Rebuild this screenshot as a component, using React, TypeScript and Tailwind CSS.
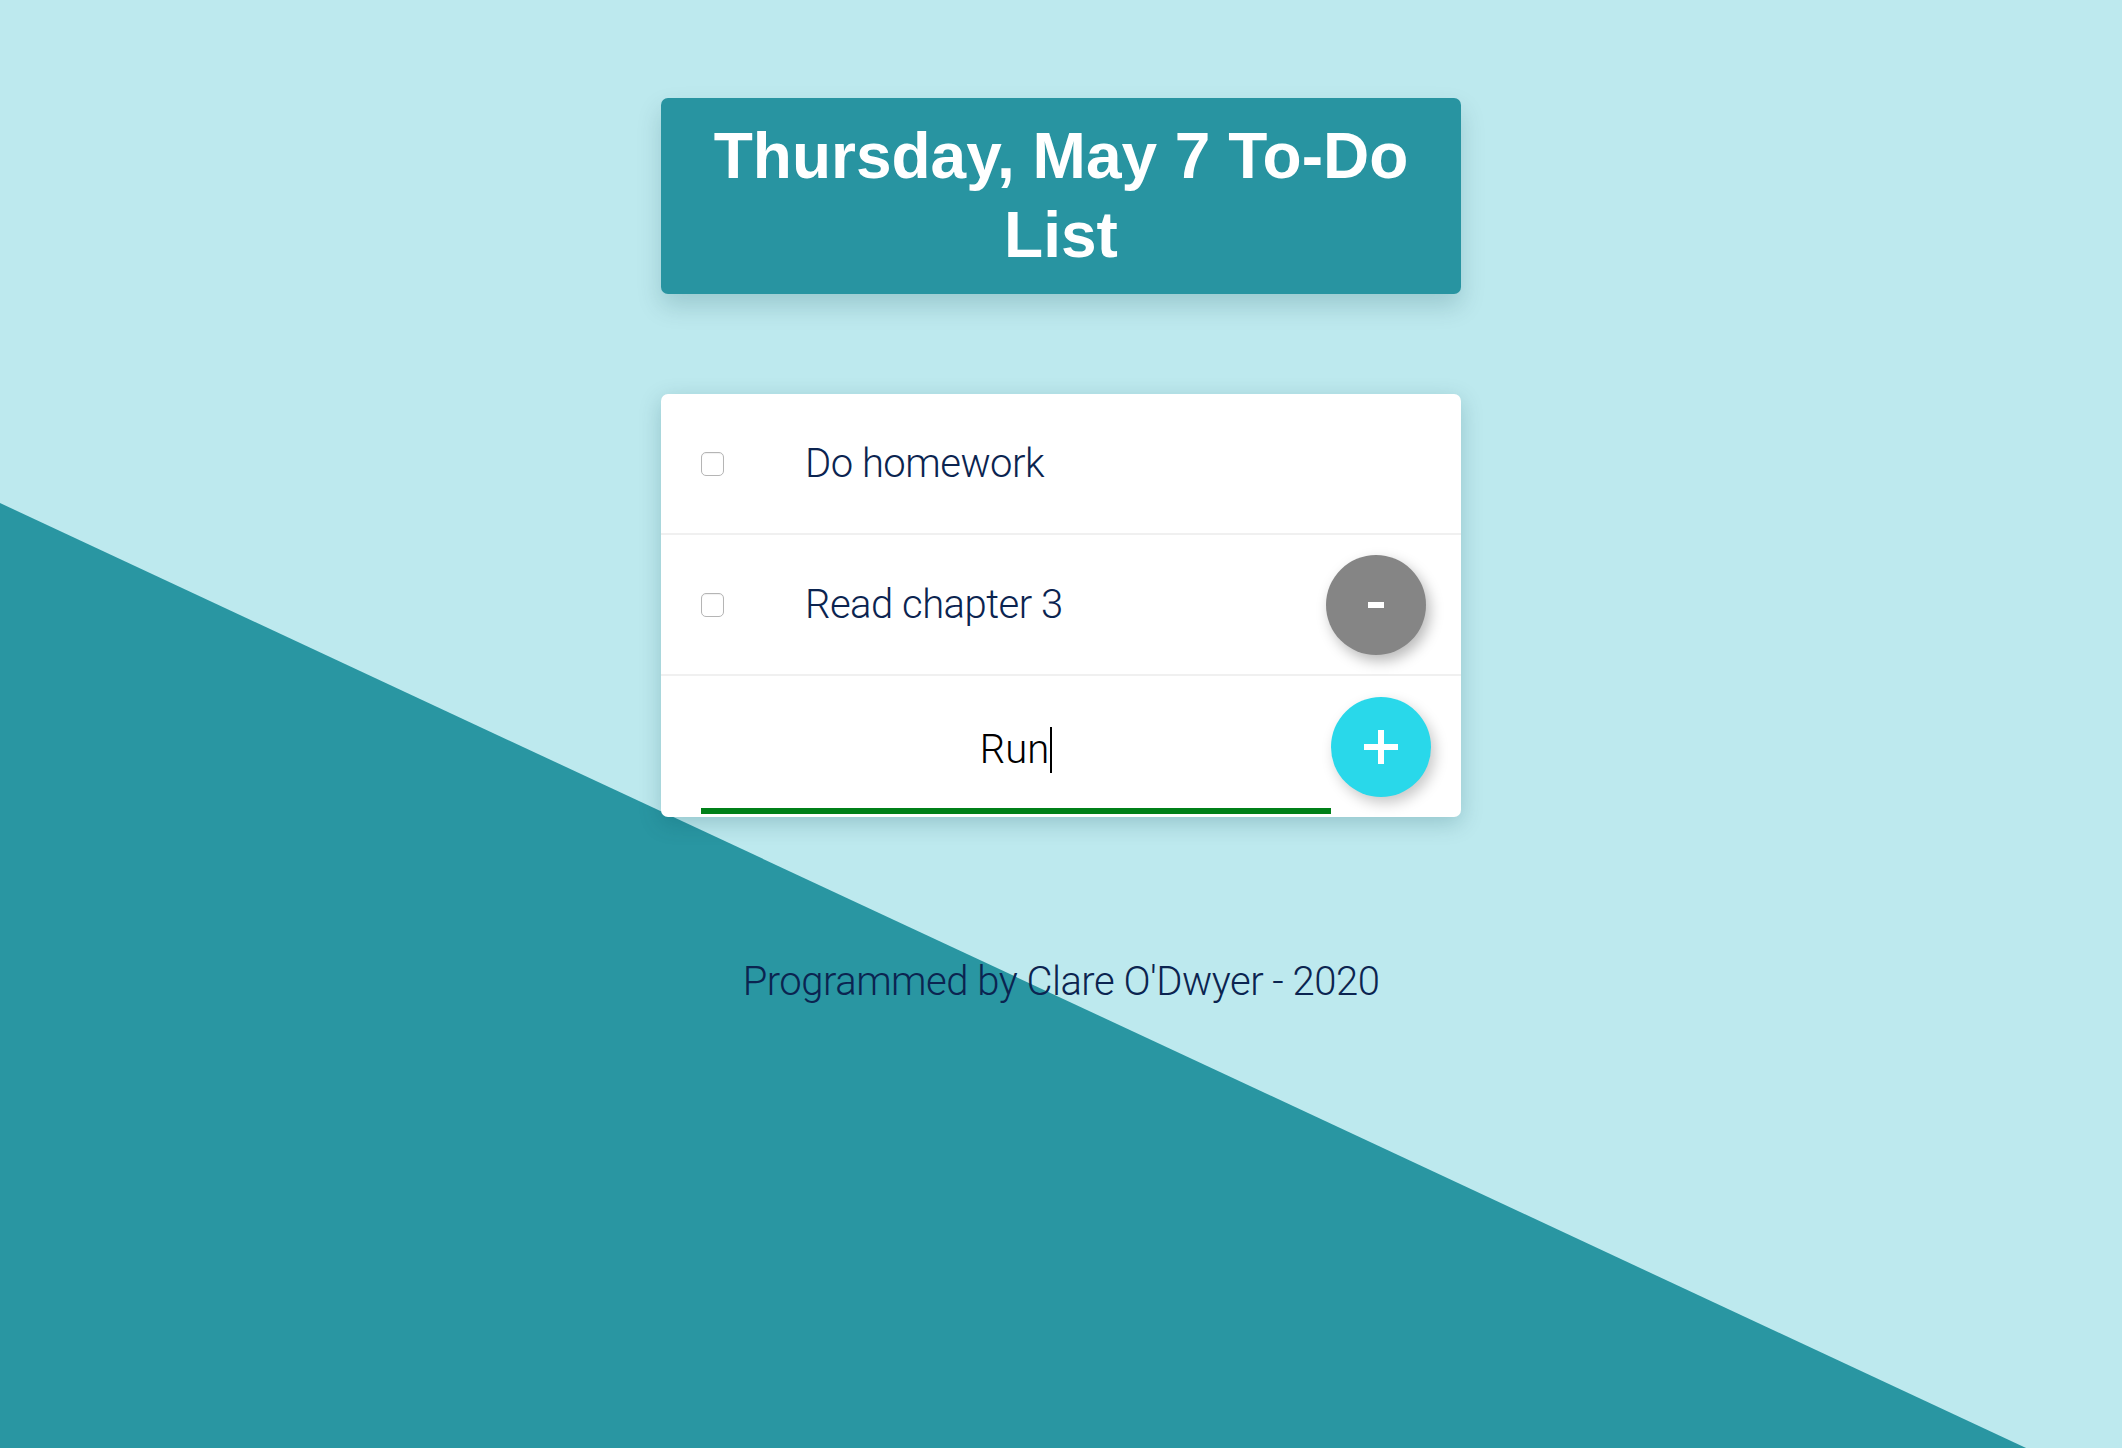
import React from 'react';

const todos = [
  { id: 1, text: 'Do homework', removable: false },
  { id: 2, text: 'Read chapter 3', removable: true },
];

const CheckBox = () => (
  <span className="block w-[23px] h-[24px] rounded-[5px] border border-[#b5b5b5] bg-white shadow-[inset_0_1px_1px_rgba(0,0,0,0.06)]" />
);

export default function App() {
  return (
    <div className="relative min-h-[1448px] w-full overflow-hidden bg-[#bde9ee]">
      {/* diagonal background band */}
      <div className="absolute inset-0 bg-[#2996a2] [clip-path:polygon(0_34.74%,95.48%_100%,0_100%)]" />

      <div className="relative flex flex-col items-center pt-[98px]">
        {/* Title */}
        <div className="w-[800px] rounded-[7px] bg-[#2894a1] py-[19px] px-6 text-center shadow-[0_12px_24px_rgba(0,60,70,0.18)]">
          <h1
            className="text-[64px] leading-[79px] font-bold text-white"
            style={{ fontFamily: '"Liberation Sans", Arial, sans-serif' }}
          >
            Thursday, May 7 To-Do List
          </h1>
        </div>

        {/* List card */}
        <div className="mt-[100px] w-[800px] rounded-[7px] bg-white shadow-[0_6px_22px_rgba(0,70,80,0.22)]">
          {todos.map((todo) => (
            <div
              key={todo.id}
              className="flex h-[141px] items-center border-b-2 border-[#f0f0f0] pl-[40px] pr-[35px]"
            >
              <CheckBox />
              <span
                className="ml-[81px] text-[40px] font-light tracking-[-0.5px] text-[#0b2450]"
                style={{ fontFamily: 'Roboto, "Liberation Sans", sans-serif' }}
              >
                {todo.text}
              </span>
              {todo.removable && (
                <button className="ml-auto flex h-[100px] w-[100px] items-center justify-center rounded-full bg-[#858585] shadow-[4px_6px_14px_rgba(0,0,0,0.28)]">
                  <span className="block h-[6px] w-[16px] bg-white" />
                </button>
              )}
            </div>
          ))}

          {/* New item row */}
          <div className="flex h-[141px] items-center pl-[40px] pr-[29px]">
            <div className="mt-[13px] flex h-[121px] w-[630px] items-center justify-center border-b-[6px] border-[#008019]">
              <span
                className="text-[40px] font-light text-black"
                style={{ fontFamily: 'Roboto, "Liberation Sans", sans-serif' }}
              >
                Run
              </span>
              <span className="ml-[1px] block h-[46px] w-[2px] bg-black" />
            </div>
            <button className="flex h-[100px] w-[100px] items-center justify-center rounded-full bg-[#29d8ea] shadow-[4px_6px_14px_rgba(0,0,0,0.22)]">
              <svg width="34" height="34" viewBox="0 0 34 34">
                <rect x="14" y="0" width="6" height="34" fill="white" />
                <rect x="0" y="14" width="34" height="6" fill="white" />
              </svg>
            </button>
          </div>
        </div>

        {/* Footer */}
        <p
          className="mt-[141px] text-[40px] leading-[48px] font-light tracking-[-0.5px] text-[#0b2450]"
          style={{ fontFamily: 'Roboto, "Liberation Sans", sans-serif' }}
        >
          Programmed by Clare O'Dwyer - 2020
        </p>
      </div>
    </div>
  );
}
